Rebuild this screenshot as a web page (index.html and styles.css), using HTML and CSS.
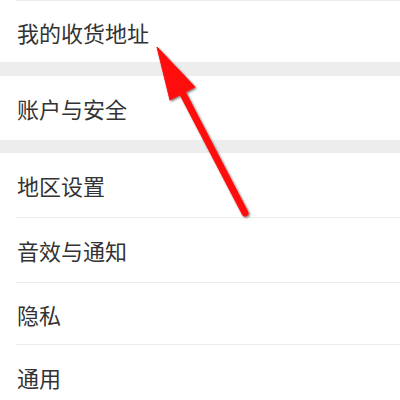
FILE: index.html
```html
<!DOCTYPE html>
<html lang="zh-CN">
<head>
<meta charset="utf-8">
<link rel="stylesheet" href="styles.css">
</head>
<body>
<div class="page">
  <div class="group first">
    <div class="row short">我的收货地址</div>
  </div>
  <div class="gap"></div>
  <div class="group">
    <div class="row tall">账户与安全</div>
  </div>
  <div class="gap gap-b"></div>
  <div class="group">
    <div class="row tall">地区设置</div>
    <div class="row tall">音效与通知</div>
    <div class="row short">隐私</div>
    <div class="row">通用</div>
  </div>
  <svg class="arrow" width="400" height="400" viewBox="0 0 400 400">
    <defs>
      <filter id="sh" x="-20%" y="-20%" width="140%" height="140%">
        <feDropShadow dx="1.2" dy="1.2" stdDeviation="1.3" flood-color="#000" flood-opacity="0.55"/>
      </filter>
    </defs>
    <g filter="url(#sh)" fill="#ff0a0a" stroke="#ff0a0a">
      <line x1="182" y1="92" x2="245" y2="213" stroke-width="7" stroke-linecap="round"/>
      <polygon points="157,47 195,87 170,100" stroke-width="1" stroke-linejoin="round"/>
    </g>
  </svg>
</div>
</body>
</html>
```
FILE: styles.css
```css
html, body {
  margin: 0;
  padding: 0;
  background: #ffffff;
}
.page {
  position: relative;
  width: 400px;
  height: 400px;
  overflow: hidden;
  font-family: "Noto Sans CJK SC", "Noto Sans", sans-serif;
}
.group {
  background: #ffffff;
}
.group.first {
  border-top: 1px solid #ececec;
  margin-left: 16px;
}
.group.first .row {
  padding-left: 1px;
}
.row {
  height: 63px;
  display: flex;
  align-items: center;
  padding-left: 17px;
  font-size: 22px;
  color: #333333;
}
.row.short {
  height: 61px;
}
.row.tall {
  height: 64px;
}
.group .row + .row {
  border-top: 1px solid #ececec;
  margin-left: 16px;
  padding-left: 1px;
}
.gap {
  height: 14px;
  background: #ededed;
}
.gap-b {
  height: 13px;
}
.arrow {
  position: absolute;
  left: 0;
  top: 0;
  pointer-events: none;
}
```
